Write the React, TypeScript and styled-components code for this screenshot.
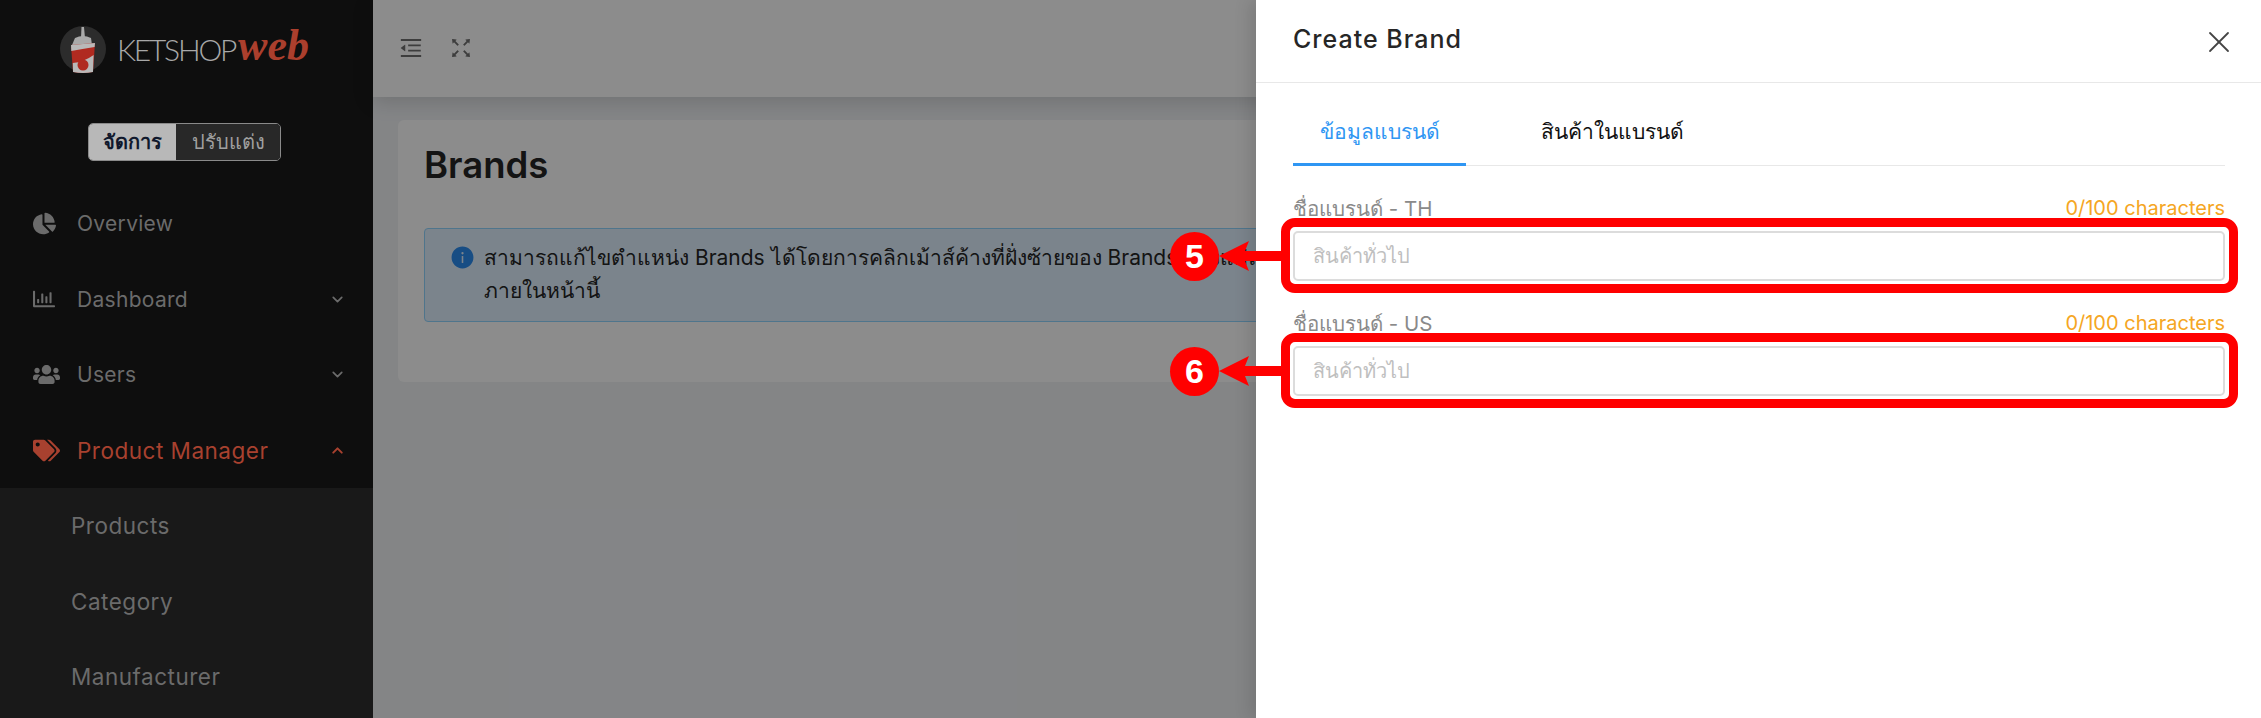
import styled, { createGlobalStyle } from "styled-components"
import { ChevronDown, ChevronUp, X } from "lucide-react"
import {
  AiFillInfoCircle,
  AiOutlineFullscreen,
  AiOutlineMenuFold,
} from "react-icons/ai"
import { FaChartPie, FaRegChartBar, FaTags, FaUsers } from "react-icons/fa"

const UI_FONT = `Inter, "Noto Sans", "Liberation Sans", sans-serif`

const GlobalStyle = createGlobalStyle`
  html, body {
    margin: 0;
    padding: 0;
    height: 718px;
    overflow: hidden;
    font-family: ${UI_FONT};
  }
  * {
    box-sizing: border-box;
  }
`

const Logo = () => (
  <LogoRow>
    <svg width="48" height="48" viewBox="0 0 48 48">
      <circle cx="23" cy="24" r="23" fill="#2c2c2c" />
      <path d="M21.5 2 L24 2 L25 13 L21 13 Z" fill="#a9a9a9" />
      <path d="M15 13 Q23 9 31 13 L32 20 L12 20 Z" fill="#a9a9a9" />
      <path d="M11 20 L35 18 L33 47 Q23 49 13 47 Z" fill="#b02a20" />
      <path d="M11 20 L35 18 L34.6 22 Q22 24 11.3 26 Z" fill="#b9b9b9" />
      <path d="M12.8 38 Q24 37 33.6 30 L33 47 Q23 49 13 47 Z" fill="#b9b9b9" />
      <circle cx="23" cy="40" r="5.5" fill="#b02a20" />
    </svg>
    <LogoName>KETSHOP</LogoName>
    <LogoScript>web</LogoScript>
  </LogoRow>
)

const Callout = ({ n }: { n: number }) => (
  <>
    <RedFrame />
    <ArrowLine width="64" height="34" viewBox="0 0 64 34">
      <path d="M0 17 L30 2 L26 12 L64 12 L64 22 L26 22 L30 32 Z" fill="#ff0000" />
    </ArrowLine>
    <Badge>{n}</Badge>
  </>
)

const Field = ({ label, n }: { label: string; n: number }) => (
  <FieldBlock>
    <FieldHead>
      <FieldLabel>{label}</FieldLabel>
      <Counter>0/100 characters</Counter>
    </FieldHead>
    <InputWrap>
      <TextInput placeholder="สินค้าทั่วไป" />
      <Callout n={n} />
    </InputWrap>
  </FieldBlock>
)

const App = () => {
  return (
    <Page>
      <GlobalStyle />
      <Sidebar>
        <Logo />
        <ModeRow>
          <ModeSwitch>
            <ModeButton $active>จัดการ</ModeButton>
            <ModeButton>ปรับแต่ง</ModeButton>
          </ModeSwitch>
        </ModeRow>
        <Menu>
          <MenuItem>
            <MenuIcon><FaChartPie size={23} /></MenuIcon>
            Overview
          </MenuItem>
          <MenuItem>
            <MenuIcon><FaRegChartBar size={22} /></MenuIcon>
            Dashboard
            <Caret><ChevronDown size={17} strokeWidth={2.4} /></Caret>
          </MenuItem>
          <MenuItem>
            <MenuIcon><FaUsers size={27} /></MenuIcon>
            Users
            <Caret><ChevronDown size={17} strokeWidth={2.4} /></Caret>
          </MenuItem>
          <MenuItem $active>
            <MenuIcon><FaTags size={27} /></MenuIcon>
            Product Manager
            <Caret><ChevronUp size={17} strokeWidth={2.8} /></Caret>
          </MenuItem>
        </Menu>
        <SubMenu>
          <SubItem>Products</SubItem>
          <SubItem>Category</SubItem>
          <SubItem>Manufacturer</SubItem>
        </SubMenu>
      </Sidebar>

      <Main>
        <TopBar>
          <AiOutlineMenuFold size={26} />
          <AiOutlineFullscreen size={26} />
        </TopBar>
        <Content>
          <Card>
            <Title>Brands</Title>
            <Alert>
              <AlertIcon><AiFillInfoCircle size={25} /></AlertIcon>
              <AlertText>
                สามารถแก้ไขตำแหน่ง Brands ได้โดยการคลิกเม้าส์ค้างที่ฝั่งซ้ายของ Brands ของแต่ละรายการ
                <br />
                ภายในหน้านี้
              </AlertText>
            </Alert>
          </Card>
        </Content>
        <Dim />
      </Main>

      <Drawer>
        <DrawerHead>
          <DrawerTitle>Create Brand</DrawerTitle>
          <CloseButton><X size={36} strokeWidth={1.2} /></CloseButton>
        </DrawerHead>
        <DrawerBody>
          <Tabs>
            <Tab $active>ข้อมูลแบรนด์</Tab>
            <Tab>สินค้าในแบรนด์</Tab>
          </Tabs>
          <Field label="ชื่อแบรนด์ - TH" n={5} />
          <Field label="ชื่อแบรนด์ - US" n={6} />
        </DrawerBody>
      </Drawer>
    </Page>
  )
}

const Page = styled.div`
  display: flex;
  position: relative;
  width: 2261px;
  height: 718px;
  overflow: hidden;
`

const Sidebar = styled.aside`
  display: flex;
  flex-direction: column;
  flex: 0 0 373px;
  background-color: #0e0e0e;
`

const LogoRow = styled.div`
  display: flex;
  align-items: center;
  height: 97px;
  padding-left: 60px;
`

const LogoName = styled.span`
  margin-left: 9px;
  font-family: "Lato", sans-serif;
  font-weight: 300;
  font-size: 30px;
  letter-spacing: -2.2px;
  color: #a8a8a8;
`

const LogoScript = styled.span`
  margin: -6px 0 0 3px;
  font-family: "Liberation Serif", serif;
  font-style: italic;
  font-weight: 700;
  font-size: 44px;
  line-height: 44px;
  color: #ab3f2d;
`

const ModeRow = styled.div`
  display: flex;
  padding: 26px 0 25px 88px;
`

const ModeSwitch = styled.div`
  display: flex;
  height: 38px;
  border: 1px solid #8a8a8a;
  border-radius: 5px;
  overflow: hidden;
`

const ModeButton = styled.div<{ $active?: boolean }>`
  display: flex;
  align-items: center;
  justify-content: center;
  width: ${(p) => (p.$active ? "87px" : "104px")};
  font-size: 20px;
  font-weight: ${(p) => (p.$active ? 700 : 400)};
  color: ${(p) => (p.$active ? "#10182c" : "#a0a0a0")};
  background-color: ${(p) => (p.$active ? "#b8b8b8" : "#282828")};
`

const Menu = styled.nav`
  display: flex;
  flex-direction: column;
`

const MenuItem = styled.div<{ $active?: boolean }>`
  display: flex;
  align-items: center;
  height: 75.5px;
  padding: 0 27px 0 33px;
  font-size: ${(p) => (p.$active ? "22.5px" : "21px")};
  letter-spacing: ${(p) => (p.$active ? "0.5px" : "0.3px")};
  color: ${(p) => (p.$active ? "#a8412f" : "#6b6b6b")};
`

const MenuIcon = styled.span`
  display: flex;
  align-items: center;
  flex: 0 0 44px;
`

const Caret = styled.span`
  display: flex;
  margin-left: auto;
`

const SubMenu = styled.div`
  display: flex;
  flex-direction: column;
  flex: 1;
  background-color: #191919;
`

const SubItem = styled.div`
  display: flex;
  align-items: center;
  height: 75.5px;
  padding-left: 71px;
  font-size: 22.5px;
  letter-spacing: 0.5px;
  color: #6b6b6b;
`

const Main = styled.main`
  display: flex;
  flex-direction: column;
  flex: 1;
  position: relative;
  min-width: 0;
  background-color: #f0f2f5;
`

const TopBar = styled.header`
  display: flex;
  align-items: center;
  gap: 24px;
  flex: 0 0 97px;
  padding: 0 0 2px 25px;
  color: #6f6f6f;
  background-color: #ffffff;
  box-shadow: 0 4px 20px rgba(0, 0, 0, 0.16);
`

const Content = styled.div`
  padding: 23px 25px;
`

const Card = styled.section`
  height: 262px;
  padding: 24px 26px;
  background-color: #ffffff;
  border-radius: 6px;
`

const Title = styled.h1`
  margin: 0 0 42px;
  font-size: 36.5px;
  line-height: 42px;
  font-weight: 600;
  color: #262626;
`

const Alert = styled.div`
  display: flex;
  gap: 9px;
  height: 94px;
  padding: 12px 25px;
  background-color: #e0f0ff;
  border: 1px solid #91d5ff;
  border-radius: 4px;
`

const AlertIcon = styled.span`
  display: flex;
  height: 33px;
  align-items: center;
  color: #2a8cf0;
`

const AlertText = styled.p`
  margin: 0;
  font-size: 21px;
  line-height: 33px;
  white-space: nowrap;
  color: #262626;
`

const Dim = styled.div`
  position: absolute;
  inset: 0;
  background-color: rgba(0, 0, 0, 0.45);
`

const Drawer = styled.aside`
  display: flex;
  flex-direction: column;
  position: absolute;
  top: 0;
  right: 0;
  bottom: 0;
  width: 1005px;
  background-color: #ffffff;
  box-shadow: -6px 0 16px rgba(0, 0, 0, 0.12);
`

const DrawerHead = styled.header`
  display: flex;
  align-items: center;
  justify-content: space-between;
  flex: 0 0 83px;
  padding: 0 24px 0 37px;
  border-bottom: 1px solid #e8e8e8;
`

const DrawerTitle = styled.h2`
  margin: -5px 0 0;
  font-size: 25px;
  font-weight: 500;
  letter-spacing: 1px;
  color: #262626;
`

const CloseButton = styled.span`
  display: flex;
  margin-top: 2px;
  color: #444444;
`

const DrawerBody = styled.div`
  display: flex;
  flex-direction: column;
  padding: 0 36px 0 37px;
`

const Tabs = styled.div`
  display: flex;
  height: 83px;
  margin-bottom: 25px;
  border-bottom: 1px solid #e8e8e8;
`

const Tab = styled.div<{ $active?: boolean }>`
  display: flex;
  align-items: center;
  justify-content: center;
  width: 173px;
  margin-right: 60px;
  margin-bottom: -1px;
  padding-top: 16px;
  font-size: 21px;
  font-weight: 500;
  color: ${(p) => (p.$active ? "#2f96f3" : "#111111")};
  border-bottom: 3px solid ${(p) => (p.$active ? "#2f96f3" : "transparent")};
`

const FieldBlock = styled.div`
  display: flex;
  flex-direction: column;
  margin-bottom: 25px;
`

const FieldHead = styled.div`
  display: flex;
  align-items: center;
  justify-content: space-between;
  height: 40px;
  padding-bottom: 6px;
`

const FieldLabel = styled.label`
  font-size: 20.5px;
  color: #8a8a8a;
`

const Counter = styled.span`
  font-size: 20px;
  color: #f5a623;
`

const InputWrap = styled.div`
  position: relative;
  height: 50px;
`

const TextInput = styled.input`
  width: 100%;
  height: 100%;
  padding: 0 18px;
  font-family: ${UI_FONT};
  font-size: 20px;
  border: 2px solid #dcdcdc;
  border-radius: 5px;
  outline: 0;
  &::placeholder {
    color: #bfbfbf;
  }
`

const RedFrame = styled.div`
  position: absolute;
  inset: -13px -13px -12px -12px;
  border: 9px solid #ff0000;
  border-radius: 14px;
  pointer-events: none;
`

const ArrowLine = styled.svg`
  position: absolute;
  left: -74px;
  top: 8px;
`

const Badge = styled.div`
  display: flex;
  align-items: center;
  justify-content: center;
  position: absolute;
  left: -123px;
  top: 1px;
  width: 49px;
  height: 49px;
  border-radius: 50%;
  background-color: #ff0000;
  font-family: "Liberation Sans", sans-serif;
  font-weight: 700;
  font-size: 34px;
  color: #ffffff;
`

export default App
